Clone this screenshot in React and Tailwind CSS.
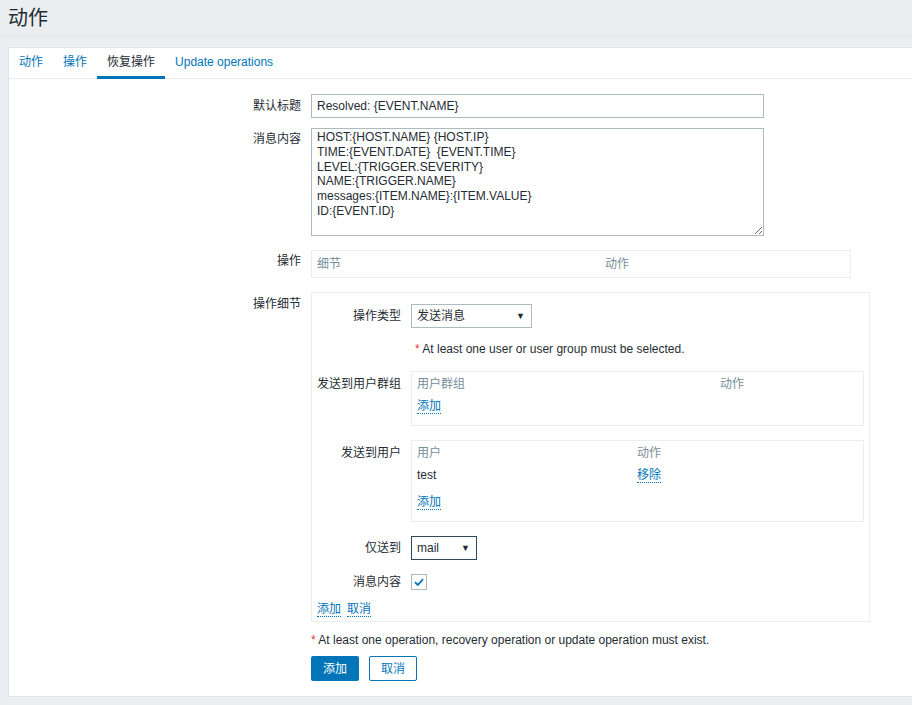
import React from 'react';

const FONT = '[font-family:"Liberation_Sans","Noto_Sans_CJK_SC",Arial,sans-serif]';

const messageBody = `HOST:{HOST.NAME} {HOST.IP}
TIME:{EVENT.DATE}  {EVENT.TIME}
LEVEL:{TRIGGER.SEVERITY}
NAME:{TRIGGER.NAME}
messages:{ITEM.NAME}:{ITEM.VALUE}
ID:{EVENT.ID}`;

const tabs = [
  { label: '动作', active: false },
  { label: '操作', active: false },
  { label: '恢复操作', active: true },
  { label: 'Update operations', active: false },
];

const Link = ({ children }) => (
  <span className="cursor-pointer border-b border-dotted border-[#0275b8] leading-[14px] text-[#0275b8]">
    {children}
  </span>
);

const Required = ({ children }) => (
  <p className="leading-[14px]">
    <span className="text-[#e33734]">*</span> {children}
  </p>
);

const Select = ({ value, width }) => (
  <div
    className={`flex h-[24px] items-center justify-between border border-[#acbbc2] bg-white pl-[5px] pr-[6px] ${width}`}
  >
    <span>{value}</span>
    <span className="text-[9px] leading-none text-[#1f2c33]">▼</span>
  </div>
);

const App = () => {
  return (
    <div className={`min-h-screen bg-[#ebeef0] text-[12px] text-[#1f2c33] ${FONT}`}>
      <div className="flex h-[36px] items-center border-b border-[#e2e7ea] px-[8px]">
        <h1 className="text-[20px] leading-none text-[#1f2c33]">动作</h1>
      </div>

      <div className="ml-[8px] mt-[11px] h-[650px] border border-r-0 border-[#dfe4e7] bg-white">
        <div className="flex h-[31px] border-b border-[#ebeef0]">
          {tabs.map((tab) => (
            <div
              key={tab.label}
              className={`flex h-[31px] items-center border-b-[3px] px-[10px] ${
                tab.active
                  ? 'border-[#0275b8] text-[#1f2c33]'
                  : 'border-transparent text-[#0275b8]'
              }`}
            >
              {tab.label}
            </div>
          ))}
        </div>

        <div className="pt-[15px]">
          {/* 默认标题 */}
          <div className="flex items-center gap-x-[10px]">
            <label className="w-[292px] text-right">默认标题</label>
            <div className="flex h-[24px] w-[453px] items-center border border-[#acbbc2] px-[5px]">
              Resolved: {'{EVENT.NAME}'}
            </div>
          </div>

          {/* 消息内容 */}
          <div className="mt-[10px] flex gap-x-[10px]">
            <label className="w-[292px] pt-[4px] text-right leading-[14px]">消息内容</label>
            <textarea
              readOnly
              defaultValue={messageBody}
              className="h-[108px] w-[453px] border border-[#acbbc2] px-[5px] pt-[1px] text-[12px] leading-[14.8px] text-[#1f2c33] outline-none"
            />
          </div>

          {/* 操作 */}
          <div className="mt-[14px] flex gap-x-[10px]">
            <label className="w-[292px] pt-[4px] text-right leading-[14px]">操作</label>
            <div className="flex h-[28px] w-[540px] items-center border border-[#ebeef0] px-[5px] text-[#768d99]">
              <span className="w-[288px]">细节</span>
              <span>动作</span>
            </div>
          </div>

          {/* 操作细节 */}
          <div className="mt-[14px] flex gap-x-[10px]">
            <label className="w-[292px] pt-[5px] text-right leading-[14px]">操作细节</label>
            <div className="h-[330px] w-[559px] border border-[#ebeef0] pt-[11px]">
              <div className="flex items-center gap-x-[10px]">
                <label className="w-[89px] text-right">操作类型</label>
                <Select value="发送消息" width="w-[121px]" />
              </div>

              <div className="ml-[101px] mt-[14px] pl-[2px]">
                <Required>At least one user or user group must be selected.</Required>
              </div>

              <div className="mt-[15px] flex gap-x-[10px]">
                <label className="w-[89px] pt-[6px] text-right leading-[14px]">发送到用户群组</label>
                <div className="h-[55px] w-[453px] border border-[#ebeef0] px-[5px] pt-[1px]">
                  <div className="flex h-[22px] items-center text-[#768d99]">
                    <span className="w-[303px]">用户群组</span>
                    <span>动作</span>
                  </div>
                  <div className="flex h-[22px] items-center">
                    <Link>添加</Link>
                  </div>
                </div>
              </div>

              <div className="mt-[14px] flex gap-x-[10px]">
                <label className="w-[89px] pt-[6px] text-right leading-[14px]">发送到用户</label>
                <div className="h-[82px] w-[453px] border border-[#ebeef0] px-[5px] pt-[1px]">
                  <div className="flex h-[22px] items-center text-[#768d99]">
                    <span className="w-[220px]">用户</span>
                    <span>动作</span>
                  </div>
                  <div className="flex h-[22px] items-center">
                    <span className="w-[220px]">test</span>
                    <Link>移除</Link>
                  </div>
                  <div className="mt-[5px] flex h-[22px] items-center">
                    <Link>添加</Link>
                  </div>
                </div>
              </div>

              <div className="mt-[14px] flex items-center gap-x-[10px]">
                <label className="w-[89px] text-right">仅送到</label>
                <div className="flex h-[24px] w-[66px] items-center justify-between border border-[#2f4a5a] bg-white pl-[5px] pr-[6px]">
                  <span>mail</span>
                  <span className="text-[9px] leading-none">▼</span>
                </div>
              </div>

              <div className="mt-[13px] flex items-center gap-x-[10px]">
                <label className="w-[89px] text-right">消息内容</label>
                <div className="flex h-[16px] w-[16px] items-center justify-center border border-[#acbbc2] bg-white">
                  <svg width="10" height="8" viewBox="0 0 10 8" fill="none">
                    <path d="M1 4.2 L3.8 7 L9 1.2" stroke="#0275b8" strokeWidth="1.8" />
                  </svg>
                </div>
              </div>

              <div className="mt-[11px] flex gap-x-[6px] pl-[5px]">
                <Link>添加</Link>
                <Link>取消</Link>
              </div>
            </div>
          </div>

          <div className="ml-[302px] mt-[11px]">
            <Required>At least one operation, recovery operation or update operation must exist.</Required>
          </div>

          <div className="ml-[302px] mt-[9px] flex gap-x-[10px]">
            <button className="h-[25px] w-[48px] rounded-[2px] bg-[#0275b8] text-[12px] text-white">
              添加
            </button>
            <button className="h-[25px] w-[48px] rounded-[2px] border border-[#0275b8] bg-white text-[12px] text-[#0275b8]">
              取消
            </button>
          </div>
        </div>
      </div>
    </div>
  );
};

export default App;
